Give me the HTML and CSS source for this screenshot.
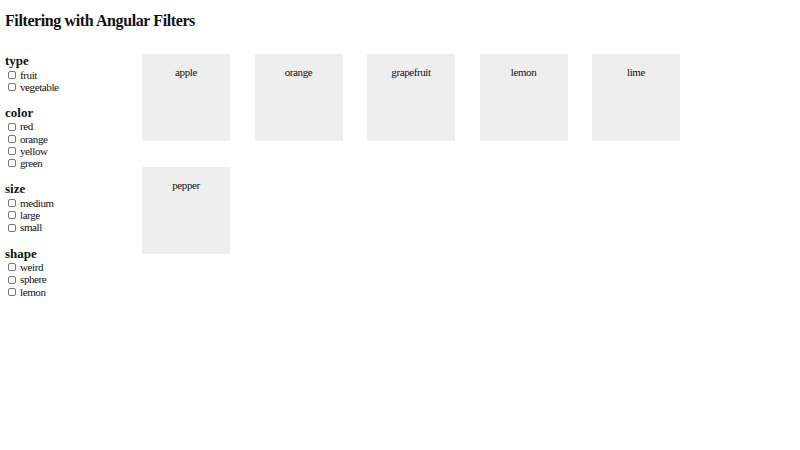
FILE: index.html
```html
<!DOCTYPE html>
<html>
<head>
<meta charset="utf-8">
<link rel="stylesheet" href="styles.css">
</head>
<body>
<h1 class="title">Filtering with Angular Filters</h1>
<div class="layout">
  <div class="sidebar">
    <div class="group">
      <h3 class="group-title">type</h3>
      <label class="opt"><input type="checkbox" class="cb"> fruit</label>
      <label class="opt"><input type="checkbox" class="cb"> vegetable</label>
    </div>
    <div class="group">
      <h3 class="group-title">color</h3>
      <label class="opt"><input type="checkbox" class="cb"> red</label>
      <label class="opt"><input type="checkbox" class="cb"> orange</label>
      <label class="opt"><input type="checkbox" class="cb"> yellow</label>
      <label class="opt"><input type="checkbox" class="cb"> green</label>
    </div>
    <div class="group">
      <h3 class="group-title">size</h3>
      <label class="opt"><input type="checkbox" class="cb"> medium</label>
      <label class="opt"><input type="checkbox" class="cb"> large</label>
      <label class="opt"><input type="checkbox" class="cb"> small</label>
    </div>
    <div class="group">
      <h3 class="group-title">shape</h3>
      <label class="opt"><input type="checkbox" class="cb"> weird</label>
      <label class="opt"><input type="checkbox" class="cb"> sphere</label>
      <label class="opt"><input type="checkbox" class="cb"> lemon</label>
    </div>
  </div>
  <div class="items">
    <div class="item">apple</div>
    <div class="item">orange</div>
    <div class="item">grapefruit</div>
    <div class="item">lemon</div>
    <div class="item">lime</div>
    <div class="item">pepper</div>
  </div>
</div>
</body>
</html>
```
FILE: styles.css
```css
html, body {
  margin: 0;
  padding: 0;
  background: #fff;
}
body {
  font-family: "Liberation Serif", "Times New Roman", serif;
  color: #111;
  font-size: 11px;
  letter-spacing: -0.4px;
  padding: 12px 5px;
}
.title {
  font-size: 16px;
  font-weight: bold;
  letter-spacing: -0.4px;
  margin: 0 0 24px 0;
  line-height: 18px;
}
.layout {
  display: flex;
  align-items: flex-start;
}
.sidebar {
  width: 137px;
  flex: none;
  display: flex;
  flex-direction: column;
  gap: 11.8px;
  margin-top: -1px;
}
.group {
  display: flex;
  flex-direction: column;
}
.group-title {
  font-size: 13px;
  font-weight: bold;
  letter-spacing: 0;
  margin: 0;
  line-height: 15.5px;
}
.opt {
  display: flex;
  align-items: center;
  height: 12.3px;
  line-height: 12.3px;
  padding-left: 3px;
  gap: 4px;
}
.cb {
  -webkit-appearance: none;
  appearance: none;
  width: 8px;
  height: 8px;
  margin: 0;
  border: 1px solid #777;
  border-radius: 2px;
  background: #fff;
  box-sizing: border-box;
}
.items {
  display: flex;
  flex-wrap: wrap;
  gap: 26px 24.5px;
  width: 600px;
}
.item {
  width: 88px;
  height: 87px;
  background: #eeeeee;
  text-align: center;
  box-sizing: border-box;
  padding-top: 12px;
  font-size: 11px;
  line-height: 13px;
}
```
